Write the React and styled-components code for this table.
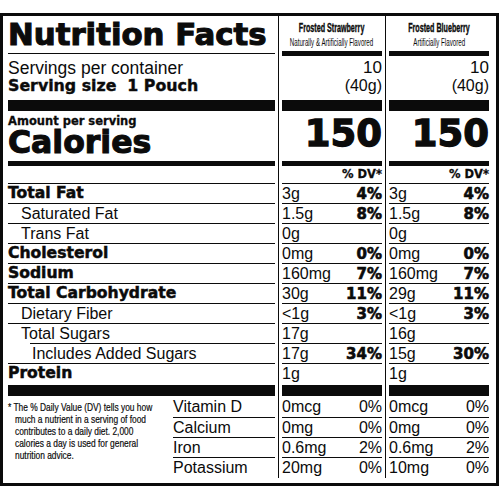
import React from "react";
import styled, { createGlobalStyle } from "styled-components";

const HEAVY = `"DejaVu Sans", "Liberation Sans", sans-serif`;
const PLAIN = `"Liberation Sans", Arial, sans-serif`;
const INK = "#0b0b0b";

const GlobalStyle = createGlobalStyle`
  html, body {
    margin: 0;
    padding: 0;
    background: #fff;
  }
  body {
    font-family: ${PLAIN};
    color: ${INK};
  }
`;

const products = [
  {
    name: "Frosted Strawberry",
    sub: "Naturally & Artificially Flavored",
    servings: "10",
    size: "(40g)",
    calories: "150",
    nutrients: [
      ["3g", "4%"],
      ["1.5g", "8%"],
      ["0g"],
      ["0mg", "0%"],
      ["160mg", "7%"],
      ["30g", "11%"],
      ["<1g", "3%"],
      ["17g"],
      ["17g", "34%"],
    ],
    protein: "1g",
    vitamins: [
      ["0mcg", "0%"],
      ["0mg", "0%"],
      ["0.6mg", "2%"],
      ["20mg", "0%"],
    ],
  },
  {
    name: "Frosted Blueberry",
    sub: "Artificially Flavored",
    servings: "10",
    size: "(40g)",
    calories: "150",
    nutrients: [
      ["3g", "4%"],
      ["1.5g", "8%"],
      ["0g"],
      ["0mg", "0%"],
      ["160mg", "7%"],
      ["29g", "11%"],
      ["<1g", "3%"],
      ["16g"],
      ["15g", "30%"],
    ],
    protein: "1g",
    vitamins: [
      ["0mcg", "0%"],
      ["0mg", "0%"],
      ["0.6mg", "2%"],
      ["10mg", "0%"],
    ],
  },
];

const nutrientLabels = [
  { label: "Total Fat", bold: true },
  { label: "Saturated Fat", level: 1 },
  { label: "Trans Fat", level: 1 },
  { label: "Cholesterol", bold: true },
  { label: "Sodium", bold: true },
  { label: "Total Carbohydrate", bold: true },
  { label: "Dietary Fiber", level: 1 },
  { label: "Total Sugars", level: 1 },
  { label: "Includes Added Sugars", level: 2 },
];

const vitaminLabels = ["Vitamin D", "Calcium", "Iron", "Potassium"];

const Label = styled.div`
  box-sizing: border-box;
  width: 499px;
  margin-top: 13px;
  border: 3px solid ${INK};
  padding: 0 4px 5px 2px;
  display: flex;
  background: #fff;
`;

const Column = styled.div`
  box-sizing: border-box;
  width: ${(p) => p.$w}px;
  padding: 0 3px 1px;
  border-left: ${(p) => (p.$divider ? `1px solid ${INK}` : "none")};
  display: flex;
  flex-direction: column;
`;

const Bar = styled.div`
  height: ${(p) => p.$h}px;
  background: ${INK};
  flex: none;
`;

const ThinRule = styled.div`
  height: 2px;
  margin-top: 2px;
  border-top: 1px solid ${INK};
  flex: none;
`;

const Title = styled.h1`
  box-sizing: border-box;
  margin: 0;
  height: 35px;
  padding-top: 1px;
  font: 700 30.8px/34px ${HEAVY};
  -webkit-text-stroke: 1.1px ${INK};
  white-space: nowrap;
`;

const Servings = styled.div`
  box-sizing: border-box;
  height: 44px;
  padding-top: 3px;
  text-align: ${(p) => (p.$right ? "right" : "left")};
`;

const ServLine = styled.div`
  font: 400 ${(p) => p.$size || 17.5}px/18px ${PLAIN};
  white-space: nowrap;
`;

const ServSize = styled.div`
  font: 700 15.8px/18px ${HEAVY};
  -webkit-text-stroke: 0.4px ${INK};
  white-space: pre;
`;

const CalBlock = styled.div`
  box-sizing: border-box;
  height: 50px;
  padding-top: 4px;
`;

const Amount = styled.div`
  font: 700 11.5px/13px ${HEAVY};
  -webkit-text-stroke: 0.3px ${INK};
  white-space: nowrap;
`;

const Calories = styled.div`
  font: 700 31.5px/26px ${HEAVY};
  -webkit-text-stroke: 1.1px ${INK};
  margin-top: 0.5px;
`;

const BigNumber = styled.div`
  box-sizing: border-box;
  height: 50px;
  padding-top: 3px;
  text-align: right;
  font: 700 37px/40px ${HEAVY};
  -webkit-text-stroke: 1.3px ${INK};
`;

const DvHead = styled.div`
  height: 17px;
  text-align: right;
  font: 700 11.5px/17px ${HEAVY};
  -webkit-text-stroke: 0.3px ${INK};
`;

const NutrientRow = styled.div`
  box-sizing: border-box;
  height: ${(p) => p.$h || 20}px;
  border-top: 1px solid ${INK};
  margin-left: ${(p) => (p.$level === 2 ? 22 : 0)}px;
  padding-left: ${(p) => (p.$level === 1 ? 13 : p.$level === 2 ? 2 : 0)}px;
  font: ${(p) =>
    p.$bold ? `700 15.6px/19px ${HEAVY}` : `400 16px/19px ${PLAIN}`};
  -webkit-text-stroke: ${(p) => (p.$bold ? `0.5px ${INK}` : "0")};
  white-space: nowrap;
`;

const ValueRow = styled.div`
  box-sizing: border-box;
  height: ${(p) => p.$h || 20}px;
  border-top: ${(p) => (p.$first ? "none" : `1px solid ${INK}`)};
  display: flex;
  justify-content: space-between;
  align-items: baseline;
  font: 400 16px/${(p) => (p.$first ? 21 : 19)}px ${PLAIN};
  white-space: nowrap;
`;

const Pct = styled.span`
  font: ${(p) => (p.$bold ? `700 15px/19px ${HEAVY}` : "inherit")};
  -webkit-text-stroke: ${(p) => (p.$bold ? `0.6px ${INK}` : "0")};
`;

const ProdHead = styled.div`
  box-sizing: border-box;
  height: 35px;
  padding-top: 5px;
  display: flex;
  flex-direction: column;
  align-items: center;
`;

const ProdName = styled.span`
  display: inline-block;
  font: 700 13px/14px ${PLAIN};
  -webkit-text-stroke: 0.4px ${INK};
  white-space: nowrap;
  transform: scaleX(0.55);
`;

const ProdSub = styled.span`
  display: inline-block;
  margin-top: 1.5px;
  font: 400 10.3px/12px ${PLAIN};
  white-space: nowrap;
  transform: scaleX(0.6);
`;

const Bottom = styled.div`
  display: flex;
`;

const Footnote = styled.div`
  width: 165px;
  flex: none;
  padding-top: 5px;
`;

const FootText = styled.p`
  margin: 0;
  width: 215px;
  padding-left: 9px;
  text-indent: -9px;
  font: 400 10.8px/12px ${PLAIN};
  -webkit-text-stroke: 0.2px ${INK};
  white-space: nowrap;
  transform: scaleX(0.777);
  transform-origin: 0 0;
`;

const VitaminList = styled.div`
  flex: 1;
  display: flex;
  flex-direction: column;
`;

const VitaminName = styled.div`
  box-sizing: border-box;
  height: ${(p) => (p.$first ? 21 : 20)}px;
  border-top: ${(p) => (p.$first ? "none" : `1px solid ${INK}`)};
  font: 400 16px/${(p) => (p.$first ? 21 : 19)}px ${PLAIN};
  white-space: nowrap;
`;

const LabelColumn = () => (
  <Column $w={273}>
    <Title>Nutrition Facts</Title>
    <ThinRule />
    <Servings>
      <ServLine>Servings per container</ServLine>
      <ServSize>{"Serving size  1 Pouch"}</ServSize>
    </Servings>
    <Bar $h={11} />
    <CalBlock>
      <Amount>Amount per serving</Amount>
      <Calories>Calories</Calories>
    </CalBlock>
    <Bar $h={5} />
    <DvHead />
    {nutrientLabels.map((n) => (
      <NutrientRow key={n.label} $bold={n.bold} $level={n.level}>
        {n.label}
      </NutrientRow>
    ))}
    <NutrientRow $bold $h={22}>
      Protein
    </NutrientRow>
    <Bar $h={11} />
    <Bottom>
      <Footnote>
        <FootText>
          * The % Daily Value (DV) tells you how
          <br />
          much a nutrient in a serving of food
          <br />
          contributes to a daily diet. 2,000
          <br />
          calories a day is used for general
          <br />
          nutrition advice.
        </FootText>
      </Footnote>
      <VitaminList>
        {vitaminLabels.map((v, i) => (
          <VitaminName key={v} $first={i === 0}>
            {v}
          </VitaminName>
        ))}
      </VitaminList>
    </Bottom>
  </Column>
);

const ProductColumn = ({ product }) => (
  <Column $w={107} $divider>
    <ProdHead>
      <ProdName>{product.name}</ProdName>
      <ProdSub>{product.sub}</ProdSub>
    </ProdHead>
    <Bar $h={5} />
    <Servings $right>
      <ServLine $size={17}>{product.servings}</ServLine>
      <ServLine $size={16}>{product.size}</ServLine>
    </Servings>
    <Bar $h={11} />
    <BigNumber>{product.calories}</BigNumber>
    <Bar $h={5} />
    <DvHead>% DV*</DvHead>
    {product.nutrients.map(([amount, dv], i) => (
      <ValueRow key={i}>
        <span>{amount}</span>
        {dv && <Pct $bold>{dv}</Pct>}
      </ValueRow>
    ))}
    <ValueRow $h={22}>
      <span>{product.protein}</span>
    </ValueRow>
    <Bar $h={11} />
    {product.vitamins.map(([amount, dv], i) => (
      <ValueRow key={i} $first={i === 0} $h={i === 0 ? 21 : 20}>
        <span>{amount}</span>
        <Pct>{dv}</Pct>
      </ValueRow>
    ))}
  </Column>
);

export default function App() {
  return (
    <>
      <GlobalStyle />
      <Label>
        <LabelColumn />
        {products.map((p) => (
          <ProductColumn key={p.name} product={p} />
        ))}
      </Label>
    </>
  );
}
